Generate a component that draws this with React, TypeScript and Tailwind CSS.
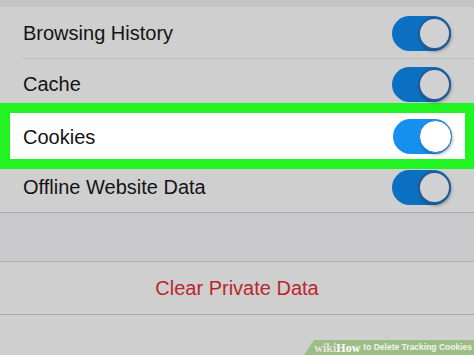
import React from 'react';

function Toggle({ bright = false }: { bright?: boolean }) {
  return (
    <div
      className={`relative h-[35px] w-[59px] shrink-0 rounded-full ${
        bright ? 'bg-[#1690ef]' : 'bg-[#0c70c2]'
      }`}
    >
      <div
        className={`absolute right-0 top-px h-[33px] w-[33px] rounded-full shadow-[1px_2px_3px_rgba(0,0,0,0.25)] ${
          bright ? 'bg-white border border-[#2f7fc4]' : 'bg-[#d1d1d3] border-2 border-[#235c92]'
        }`}
      />
    </div>
  );
}

export default function App() {
  return (
    <div
      className="relative h-[355px] w-[474px] overflow-hidden bg-[#cfcfd0] text-[20px] text-[#141414]"
      style={{ fontFamily: '"Liberation Sans", Arial, sans-serif' }}
    >
      {/* top strip */}
      <div className="h-[7px] bg-[#c4c4c6]" />

      {/* Browsing History */}
      <div className="flex h-[52px] flex-col">
        <div className="flex flex-1 items-center justify-between pl-[23px] pr-[23px] pt-[1px]">
          <span>Browsing History</span>
          <Toggle />
        </div>
        <div className="ml-[22px] h-px bg-[#bdbdbf]" />
      </div>

      {/* Cache */}
      <div className="flex h-[44px] items-start justify-between pl-[23px] pr-[23px] pt-[8px]">
        <span className="leading-[35px]">Cache</span>
        <Toggle />
      </div>

      {/* Cookies (highlighted) */}
      <div className="h-[66px] border-[10px] border-[#22f323] border-r-[9px]">
        <div className="flex h-full items-center justify-between bg-white pl-[13px] pr-[13px]">
          <span className="pt-[2px]">Cookies</span>
          <Toggle bright />
        </div>
      </div>

      {/* Offline Website Data */}
      <div className="flex h-[44px] items-start justify-between border-b border-[#a9a9ab] pl-[23px] pr-[23px] pt-[1px]">
        <span className="leading-[35px]">Offline Website Data</span>
        <Toggle />
      </div>

      {/* spacer */}
      <div className="h-[49px] border-b border-[#b0b0b2] bg-[#c9c9cb]" />

      {/* Clear Private Data */}
      <div className="flex h-[53px] items-center justify-center border-b border-[#a9a9ab] text-[#b9272b]">
        Clear Private Data
      </div>

      {/* wikiHow watermark */}
      <div className="absolute bottom-0 right-0 flex h-[15px] w-[170px] items-center justify-end whitespace-nowrap bg-[#9dbd86] pr-[2px] [clip-path:polygon(10px_0,100%_0,100%_100%,0_100%)]">
        <span
          className="text-[12px] font-bold leading-none text-[#e2e4dc]"
          style={{ fontFamily: '"Liberation Serif", serif' }}
        >
          wiki
        </span>
        <span
          className="text-[12px] font-bold leading-none text-white"
          style={{ fontFamily: '"Liberation Serif", serif' }}
        >
          How
        </span>
        <span className="ml-[3px] text-[8.5px] font-bold leading-none text-[#f1f4ec]">
          to Delete Tracking Cookies
        </span>
      </div>
    </div>
  );
}
